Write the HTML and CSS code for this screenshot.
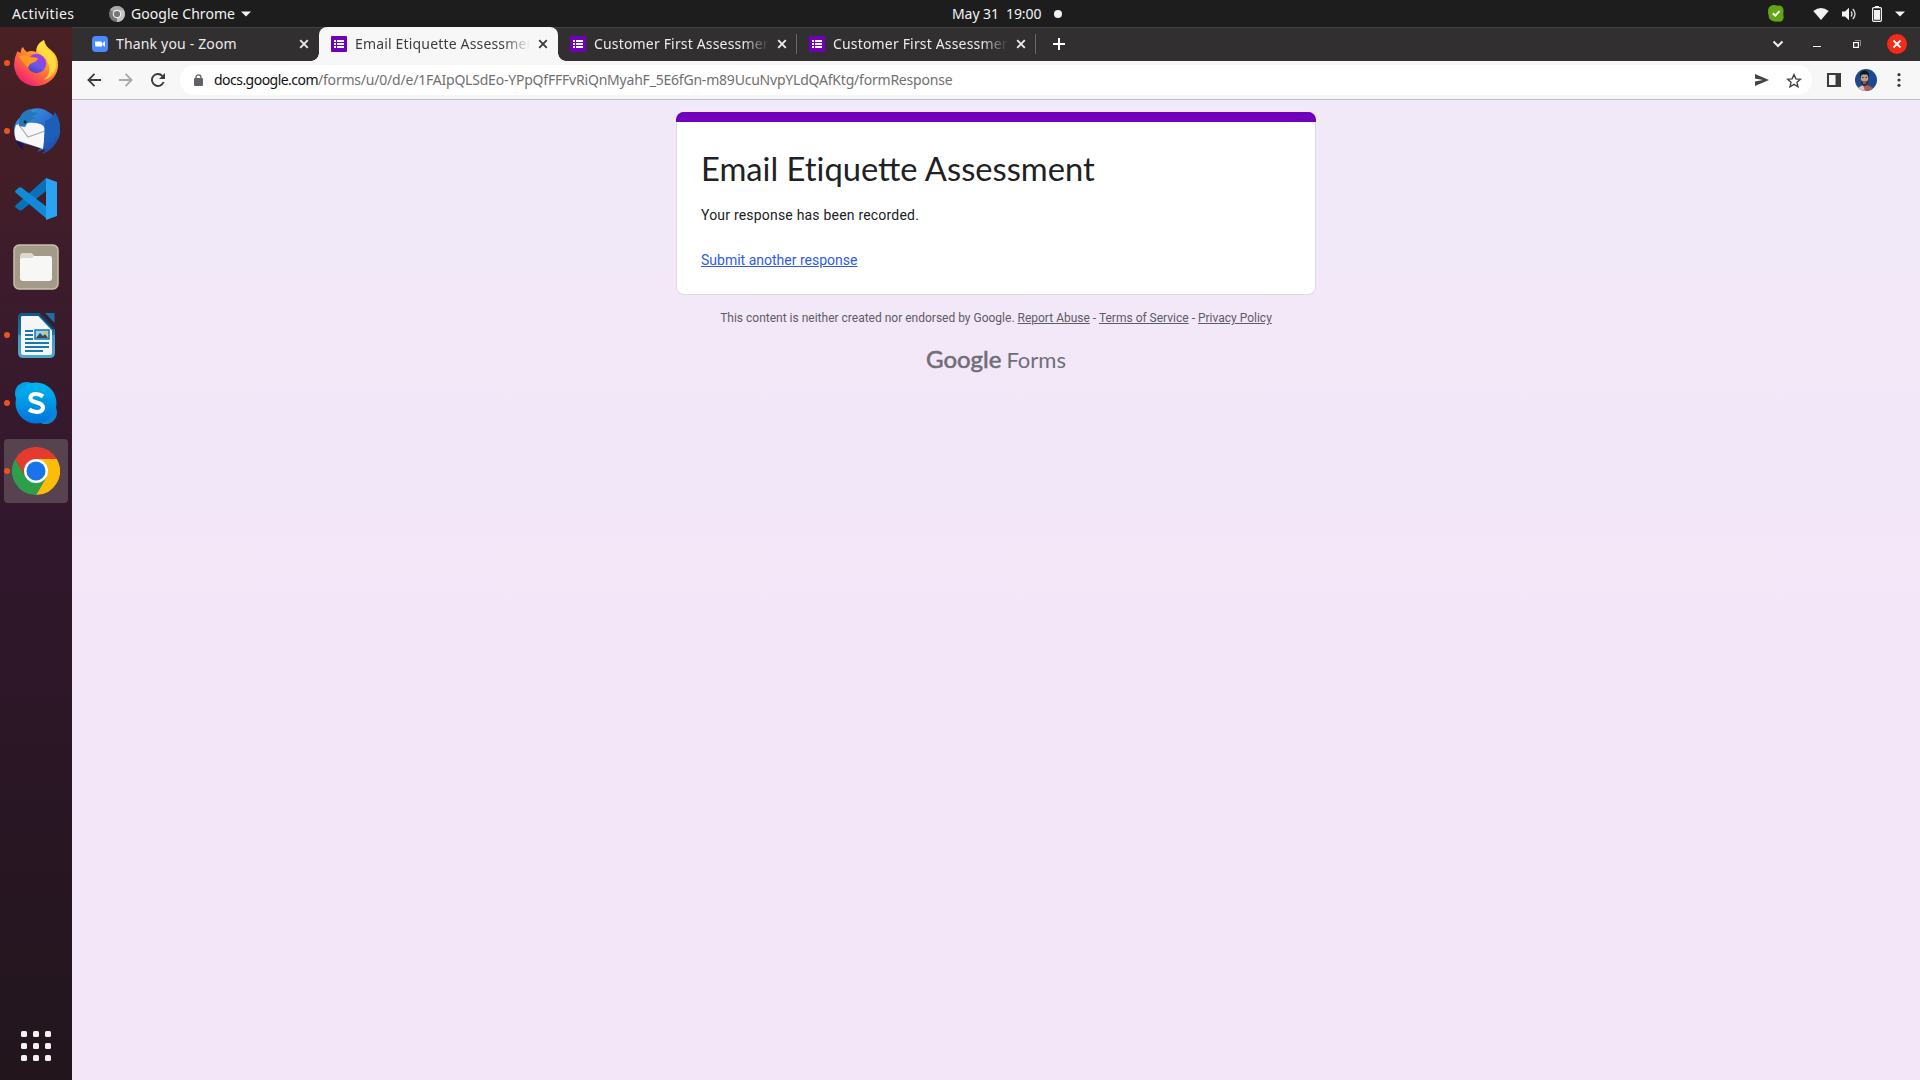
FILE: index.html
```html
<!DOCTYPE html>
<html lang="en">
<head>
<meta charset="utf-8">
<title>Email Etiquette Assessment</title>
<link rel="stylesheet" href="styles.css">
</head>
<body>
<svg width="0" height="0" class="defs" aria-hidden="true">
  <defs>
    <linearGradient id="fox" x1="1" y1="0" x2=".25" y2="1"><stop offset="0" stop-color="#fff44f"/><stop offset=".35" stop-color="#ffb52c"/><stop offset=".62" stop-color="#ff7139"/><stop offset="1" stop-color="#f01b74"/></linearGradient>
    <linearGradient id="globe" x1=".8" y1="0" x2=".3" y2="1"><stop offset="0" stop-color="#b833e1"/><stop offset=".6" stop-color="#6b57e8"/><stop offset="1" stop-color="#4b3fb5"/></linearGradient>
    <linearGradient id="bird" x1="0" y1="0" x2="1" y2="1"><stop offset="0" stop-color="#3fa5e8"/><stop offset=".5" stop-color="#2a6fd0"/><stop offset="1" stop-color="#1d3f9a"/></linearGradient>
    <linearGradient id="skype" x1="0" y1="0" x2="0" y2="1"><stop offset="0" stop-color="#00b7f0"/><stop offset="1" stop-color="#0074d9"/></linearGradient>
    <linearGradient id="writer" x1="0" y1="0" x2="0" y2="1"><stop offset="0" stop-color="#0e5c8d"/><stop offset=".5" stop-color="#1a78ad"/><stop offset=".5" stop-color="#3f97c6"/><stop offset="1" stop-color="#4ba6d2"/></linearGradient>
    <symbol id="forms" viewBox="0 0 16 16"><rect width="16" height="16" rx="1" fill="#7200ba"/><path d="M3 4h2v2H3zm3 0h7v2H6zM3 7h2v2H3zm3 0h7v2H6zm-3 3h2v2H3zm3 0h7v2H6z" fill="#fff"/></symbol>
    <symbol id="x" viewBox="0 0 10 10"><path d="M1.200 1.200l7.600 7.600M8.800 1.200L1.200 8.800" stroke="currentColor" stroke-width="1.900" fill="none"/></symbol>
  </defs>
</svg>

<header class="topbar">
  <span class="activities">Activities</span>
  <div class="appmenu">
    <svg width="16" height="16" viewBox="0 0 16 16"><circle cx="8" cy="8" r="8" fill="#777"/><path d="M8 8L1.100 4A8 8 0 0 1 14.900 4z" fill="#aaa"/><path d="M8 16a8 8 0 0 0 6.900-12H8z" fill="#c4c4c4"/><circle cx="8" cy="8" r="4.300" fill="#eee"/><circle cx="8" cy="8" r="3.100" fill="#777"/></svg>
    <span class="appname">Google Chrome</span>
    <svg width="10" height="6" viewBox="0 0 10 6"><path d="M0 .5h10L5 5.500z" fill="#f2f2f2"/></svg>
  </div>
  <div class="clock"><span class="date">May 31&nbsp; 19:00</span><i></i></div>
  <div class="tray">
    <svg width="16" height="17" viewBox="0 0 16 17"><path d="M6 0q4 1 6 .6Q16 2 15.500 7q-.5 2 .2 5-.5 4.500-4 4.700-2-.4-4 0Q.3 16 .5 10-.3 7 .3 4 1.500.3 6 0z" fill="#63a615"/><path d="M4.800 8.300l2.500 2.300 4.200-4.400" stroke="#fff" stroke-width="1.900" fill="none"/></svg>
    <svg class="wifi" width="16" height="12" viewBox="0 0 16 12"><path d="M.3 3Q8-3 15.700 3L8 12z" fill="#f2f2f2"/></svg>
    <svg class="vol" width="15" height="14" viewBox="0 0 15 14"><path d="M0 4.500h3L7 .8v12.400L3 9.500H0z" fill="#f2f2f2"/><path d="M9 4.500q2 2.500 0 5M10.800 2q4.500 5 0 10" stroke="#ddd" stroke-width="1.300" fill="none"/></svg>
    <svg class="bat" width="10" height="16" viewBox="0 0 10 16"><path d="M3 0h4v2H3z" fill="#f2f2f2"/><rect x=".6" y="1.700" width="8.800" height="13.600" rx="1" fill="none" stroke="#f2f2f2" stroke-width="1.200"/><path d="M2 4h6v9.800H2z" fill="#f2f2f2"/></svg>
    <svg class="caret" width="10" height="6" viewBox="0 0 10 6"><path d="M0 .5h10L5 5.500z" fill="#f2f2f2"/></svg>
  </div>
</header>

<div class="desktop">
  <nav class="dock">
    <div class="app running"><svg width="44" height="48" viewBox="0 0 44 48">
      <path d="M3.500 12Q0 19 0 26c1 13 10.500 21 22 21s22-9 22-21q0-9-6-14-7-5-8-11-8 5-8 12-5-2-9 0-3-2-4-5-2 1-2.500 6Q4 13 3.500 12z" fill="url(#fox)"/>
      <path d="M30 1q0 7 6 11 7 6 6 16-2 10-12 13 7-6 5-14-2-8-8-11-5-3-4-8 2-5 7-7z" fill="#ffe544" opacity=".8"/>
      <circle cx="22.500" cy="24.500" r="9.700" fill="url(#globe)"/><path d="M5 17q7-2 12 1l7 1q-1 4-6 5-3 1-4 5-5-5-9-12z" fill="#ff9a1f"/></svg></div>
    <div class="app running"><svg width="48" height="48" viewBox="0 0 48 48">
      <path d="M10 9Q18-1 31 2q15 6 17 22-2 17-18 23l4-5-9 3 4-5-16-3-9-4Q-2 17 10 9z" fill="url(#bird)"/><path d="M4 18q9-3 20-2 10 1 9 9l-2 17L4 33Q1 25 4 18z" fill="#f7f7f9"/><path d="M7 18l9 12 17-6" fill="none" stroke="#aaa" stroke-width="1.200"/><path d="M18 2Q6 5 7 19l6 1q3-7 12-9l-5-1 7-4-7-1z" fill="#2377bd"/><circle cx="13" cy="15" r="1.400" fill="#122"/><path d="M33 14q8-3 10-9 9 14 3 27l-3-5-2 9-4-3-3 5-2-5z" fill="#1d5fb8"/><path d="M4 34l8 3q-2 3 0 6-6-3-8-9z" fill="#20134f"/></svg></div>
    <div class="app"><svg width="42" height="42" viewBox="0 0 42 42"><path d="M0 29q0-1 1-2L31 0v13L7 32q-1.500 1-3 0z" fill="#0871b8"/><path d="M0 13l4-3.500q1.500-.8 3 .5L32 29v12L1 15q-1-1-1-2z" fill="#118bd8"/><path d="M31 0l11 4v34l-11 4z" fill="#29a3f2"/></svg></div>
    <div class="app"><svg width="46" height="46" viewBox="0 0 46 46"><rect x="1" y="1" width="44" height="44" rx="5" fill="#a39b88" stroke="#c6bfaf" stroke-width="1.500"/><path d="M7 12q0-3 3-3h8q2 0 3 3v8H7z" fill="#dcd8cf"/><path d="M7 16q0-2 2-2h10l2-2h16q2 0 2 2v20q0 3-3 3H10q-3 0-3-3z" fill="#f7f7f5"/></svg></div>
    <div class="app running"><svg width="37" height="45" viewBox="0 0 37 45"><path d="M4 1.500h17L35.500 17v22.500q0 4-4 4H5.500q-4 0-4-4V5q0-3.500 2.500-3.500z" fill="#f6f6f6" stroke="url(#writer)" stroke-width="3"/><path d="M27 0h9.500v10z" fill="#1870a6"/><path d="M22 1l14 15" stroke="#123d59" stroke-width="2"/><path d="M7 18h8M7 22h8M7 26h8M7 30h24M7 34h24M7 38h18" stroke="#1778ae" stroke-width="2"/><rect x="17" y="17" width="14" height="9" fill="#8ed4ef" stroke="#1778ae" stroke-width="1.500"/><path d="M18 25l4-5 3 3 2-2 3 4z" fill="#444"/><circle cx="28" cy="20" r="1.600" fill="#f5bb20"/></svg></div>
    <div class="app running"><svg width="42" height="42" viewBox="0 0 42 42"><circle cx="11.500" cy="11.500" r="11.500" fill="#079fe4"/><circle cx="30.500" cy="30.500" r="11.500" fill="#1381d6"/><circle cx="21" cy="21" r="20.500" fill="url(#skype)"/><path d="M28 14.500q-3.500-2.700-7.500-2.500-5 .3-5 4 0 3 5.500 4.300 7 1.700 7 5.200 0 4-6 4.500-4.500 0-8-2.500" fill="none" stroke="#fff" stroke-width="4.200"/></svg></div>
    <div class="app running active"><svg width="48" height="48" viewBox="0 0 48 48"><path d="M24 12h20.800A24 24 0 0 1 24 48l10.400-18z" fill="#fbbc0a"/><path d="M3.200 12L13.600 30 24 36l10.400-6L24 48A24 24 0 0 1 3.200 12z" fill="#2e9e4b"/><path d="M24 12h20.800A24 24 0 0 0 3.200 12l10.400 18z" fill="#e33b2e"/><circle cx="24" cy="24" r="12" fill="#fff"/><circle cx="24" cy="24" r="9.500" fill="#1a73e8"/></svg></div>
    <div class="grid"><i></i><i></i><i></i><i></i><i></i><i></i><i></i><i></i><i></i></div>
  </nav>

  <main class="window">
    <div class="tabs">
      <div class="tab first"><svg width="16" height="16" viewBox="0 0 16 16"><rect width="16" height="16" rx="4" fill="#4a8cff"/><path d="M3 5.500h5.500q1.500 0 1.500 1.500v3.500H4.500Q3 10.500 3 9zM10.500 7L13 5.300v5.400L10.500 9z" fill="#fff"/></svg><span class="label">Thank you - Zoom</span><svg class="close" width="10" height="10"><use href="#x"/></svg></div>
      <div class="tab current"><svg width="16" height="16"><use href="#forms"/></svg><span class="label fade">Email Etiquette Assessment</span><svg class="close" width="10" height="10"><use href="#x"/></svg></div>
      <div class="tab ruled"><svg width="16" height="16"><use href="#forms"/></svg><span class="label fade">Customer First Assessment</span><svg class="close" width="10" height="10"><use href="#x"/></svg></div>
      <div class="tab ruled"><svg width="16" height="16"><use href="#forms"/></svg><span class="label fade">Customer First Assessment</span><svg class="close" width="10" height="10"><use href="#x"/></svg></div>
      <svg class="plus" width="12" height="12" viewBox="0 0 12 12"><path d="M6 0v12M0 6h12" stroke="#fff" stroke-width="2"/></svg>
      <div class="controls">
        <svg width="12" height="8" viewBox="0 0 12 8"><path d="M1.500 1.500L6 6l4.500-4.500" fill="none" stroke="#eee" stroke-width="2"/></svg>
        <svg width="8" height="8" viewBox="0 0 8 8"><path d="M0 6.500h8" stroke="#fff"/></svg>
        <svg width="8" height="8" viewBox="0 0 8 8"><path d="M2 .5h5.500V6" fill="none" stroke="#8a8888"/><rect x=".6" y="2.600" width="4.800" height="4.800" fill="none" stroke="#fff" stroke-width="1.200"/></svg>
        <svg width="20" height="20" viewBox="0 0 20 20"><circle cx="10" cy="10" r="10" fill="#f52a17"/><path d="M6.500 6.500l7 7M13.500 6.500l-7 7" stroke="#fff" stroke-width="1.800"/></svg>
      </div>
    </div>
    <div class="toolbar">
      <div class="navs">
        <svg width="14" height="14" viewBox="0 0 14 14"><path d="M14 7H1.500M7.500 .8L1.400 7l6.100 6.200" fill="none" stroke="#3c3c3c" stroke-width="1.800"/></svg>
        <svg width="14" height="14" viewBox="0 0 14 14"><path d="M0 7h12.500M6.500 .8L12.600 7l-6.100 6.200" fill="none" stroke="#a9a9a9" stroke-width="1.800"/></svg>
        <svg width="14" height="14" viewBox="0 0 14 14"><path d="M12.600 9A6 6 0 1 1 11.300 2.800L13 4.500" fill="none" stroke="#3c3c3c" stroke-width="1.900"/><path d="M14 0v6H8z" fill="#3c3c3c"/></svg>
      </div>
      <div class="omnibox">
        <svg width="9" height="12" viewBox="0 0 9 12"><path d="M2 5V3.300a2.500 2.500 0 0 1 5 0V5" fill="none" stroke="#5f6368" stroke-width="1.300"/><rect y="4" width="9" height="8" rx="1" fill="#5f6368"/></svg>
        <span class="url"><b>docs.google.com</b>/forms/u/0/d/e/1FAIpQLSdEo-YPpQfFFFvRiQnMyahF_5E6fGn-m89UcuNvpYLdQAfKtg/formResponse</span>
        <svg class="send" width="14" height="12" viewBox="0 0 14 12"><path d="M0 0l14 6L0 12V7.500L8 6 0 4.500z" fill="#444"/></svg>
        <svg class="star" width="16" height="15" viewBox="0 0 16 15"><path d="M8 1.600l1.900 4.300 4.500.4-3.400 3 1 4.500L8 11.400l-4 2.400 1-4.500-3.400-3 4.500-.4z" fill="none" stroke="#444" stroke-width="1.400"/></svg>
      </div>
      <svg class="panel" width="14" height="14" viewBox="0 0 14 14"><path d="M0 0h14v14H0zM2 2v10h6.500V2z" fill="#3c3c3c" fill-rule="evenodd"/></svg>
      <svg class="avatar" width="22" height="22" viewBox="0 0 22 22"><clipPath id="round"><circle cx="11" cy="11" r="11"/></clipPath><g clip-path="url(#round)"><path d="M0 0h22v22H0z" fill="#1d4a8c"/><path d="M1 22q1-4 7-6h4q7 2 7 6z" fill="#a9605c"/><path d="M3 19l5-3 2 6H4z" fill="#d9c5c5"/><ellipse cx="9.500" cy="9.500" rx="3.700" ry="5.500" fill="#c49a8a"/><path d="M5.300 9Q4 1.500 9.500 1.500T13.700 9L12.500 5.500h-6z" fill="#14161f"/><path d="M5.800 11l1.700 1.600h4L13.200 11q0 6-3.700 6t-3.700-6z" fill="#332a2e"/><path d="M8 14h3" stroke="#c99" stroke-width="1"/><path d="M7 8.500h1.500M10.500 8.500H12" stroke="#322" stroke-width=".9"/></g></svg>
      <svg class="dots" width="4" height="14" viewBox="0 0 4 14"><g fill="#3c3c3c"><circle cx="2" cy="1.700" r="1.600"/><circle cx="2" cy="7" r="1.600"/><circle cx="2" cy="12.300" r="1.600"/></g></svg>
    </div>
    <section class="page">
      <article class="card">
        <h1>Email <span class="loose">Et</span>iquette Assessment</h1>
        <p>Your response has been recorded.</p>
        <a class="again">Submit another response</a>
      </article>
      <p class="legal">This content is neither created nor endorsed by Google. <u>Report Abuse</u> - <u>Terms of Service</u> - <u>Privacy Policy</u></p>
      <p class="brand"><span class="goog">Google</span><span class="frm">Forms</span></p>
    </section>
  </main>
</div>
</body>
</html>
```
FILE: styles.css
```css
* { box-sizing: border-box; }
body {
  margin: 0;
  width: 1920px;
  height: 1080px;
  overflow: hidden;
  display: flex;
  flex-direction: column;
  font-family: "Noto Sans", sans-serif;
  font-size: 14px;
}
svg { display: block; flex: none; }
b { font-weight: 400; }
.defs { position: absolute; }

.topbar {
  height: 27px;
  flex: none;
  display: grid;
  grid-template-columns: 109px 843px 1fr auto;
  align-items: center;
  background: #1d1d1d;
  color: #f2f2f2;
  white-space: nowrap;
}
.activities { padding-left: 12px; letter-spacing: .4px; }
.appmenu, .clock, .tray { display: flex; align-items: center; }
.appname { margin: 0 6px; letter-spacing: .05px; }
.date { letter-spacing: -.08px; padding-bottom: 1px; }
.clock i { width: 8px; height: 8px; border-radius: 50%; background: #f2f2f2; margin-left: 13px; }
.tray { padding-right: 15px; }
.wifi { margin-left: 29px; }
.vol { margin-left: 13px; }
.bat { margin-left: 15px; }
.caret { margin-left: 13px; }

.desktop { flex: 1; display: flex; min-height: 0; }
.dock {
  width: 72px;
  flex: none;
  display: flex;
  flex-direction: column;
  align-items: center;
  padding-top: 4px;
  gap: 4px;
  background: linear-gradient(#4a2023 0, #3a1b2c 28%, #32172d 45%, #24161f 92%, #22151c);
}
.app {
  width: 64px;
  height: 64px;
  flex: none;
  display: flex;
  align-items: center;
  justify-content: center;
  position: relative;
  border-radius: 4px;
}
.app.active { background: #57424f; }
.running::before {
  content: "";
  position: absolute;
  left: 0;
  top: 29px;
  width: 6px;
  height: 6px;
  border-radius: 50%;
  background: #e95420;
}
.grid {
  margin: auto 0 19px;
  display: grid;
  grid-template-columns: repeat(3, 6px);
  gap: 6px;
}
.grid i { height: 6px; border-radius: 1.5px; background: #f3f1ef; }

.window { flex: 1; display: flex; flex-direction: column; }
.tabs {
  height: 34px;
  flex: none;
  display: flex;
  align-items: stretch;
  background: #322f30;
  box-shadow: inset 0 1px #454344;
  color: #ebebeb;
}
.tab {
  width: 239px;
  display: flex;
  align-items: center;
  padding: 0 10px 0 12px;
  position: relative;
}
.tab.first { width: 247px; padding-left: 20px; padding-right: 10px; }
.label {
  flex: 1;
  margin: 0 6px 0 8px;
  padding-bottom: 1px;
  overflow: hidden;
  white-space: nowrap;
  letter-spacing: .17px;
}
.label.fade { -webkit-mask-image: linear-gradient(90deg, #000 84%, transparent 99%); mask-image: linear-gradient(90deg, #000 84%, transparent 99%); }
.tab.current {
  background: #f7f7f7;
  color: #3e3e3e;
  border-radius: 8px 8px 0 0;
}
.current::before, .current::after {
  content: "";
  position: absolute;
  bottom: 0;
  width: 8px;
  height: 8px;
}
.current::before { left: -8px; background: radial-gradient(circle at 0 0, transparent 7.5px, #f7f7f7 8px); }
.current::after { right: -8px; background: radial-gradient(circle at 100% 0, transparent 7.5px, #f7f7f7 8px); }
.ruled::after {
  content: "";
  position: absolute;
  right: 0;
  top: 7px;
  width: 1px;
  height: 20px;
  background: #6a6868;
}
.plus { margin: 11px 0 0 17px; }
.controls { margin-left: auto; display: flex; align-items: center; padding-right: 13px; }
.controls svg:nth-child(2) { margin-left: 29px; }
.controls svg:nth-child(3) { margin-left: 32px; }
.controls svg:nth-child(4) { margin-left: 26px; }

.toolbar {
  height: 39px;
  flex: none;
  display: flex;
  align-items: center;
  background: #f7f7f7;
  border-bottom: 1px solid #bfbfbf;
}
.navs { display: flex; gap: 18px; padding-left: 15px; width: 108px; }
.omnibox {
  width: 1632px;
  height: 30px;
  border-radius: 15px;
  background: #fff;
  display: flex;
  align-items: center;
  padding: 0 10px 0 14px;
}
.url { margin-left: 11px; padding-bottom: 1px; color: #70706f; white-space: nowrap; letter-spacing: -.21px; }
.url b { color: #111; letter-spacing: -.53px; }
.send { margin-left: auto; }
.star { margin-left: 17px; }
.panel { margin-left: 15px; }
.avatar { margin-left: 14px; }
.dots { margin-left: 20px; }

.page {
  flex: 1;
  display: flex;
  flex-direction: column;
  align-items: center;
  padding-top: 12px;
  background: linear-gradient(#f1e9f8, #f3e6f8 60%, #f3e6f8);
  font-family: Roboto, sans-serif;
}
.card {
  width: 640px;
  height: 183px;
  background: linear-gradient(#7200ba 10px, #fff 10px) border-box;
  border: solid #dadce0;
  border-width: 0 1px 1px;
  border-image: none;
  border-radius: 8px;
  padding: 37px 24px 0;
  color: #202124;
  position: relative;
}
.card::before {
  content: "";
  position: absolute;
  left: -1px;
  right: -1px;
  top: 0;
  height: 10px;
  border-radius: 8px 8px 0 0;
  background: #7200ba;
}
h1 { margin: 0; font: 400 32.7px/40px Lato, sans-serif; }
.loose { letter-spacing: .1px; }
.card p { margin: 16px 0 0; line-height: 20px; letter-spacing: .2px; }
.again { display: block; width: fit-content; margin-top: 25px; line-height: 20px; color: #2f5bea; text-decoration: underline; }
.legal { margin: 15px 0 0; font-size: 12px; line-height: 16px; color: #5f5b64; }
.brand {
  margin: 18px 0 0;
  display: flex;
  align-items: baseline;
  gap: 5px;
  font: 400 22px/30px Lato, sans-serif;
  color: #716d77;
}
.goog { font-size: 24px; -webkit-text-stroke: .6px #716d77; }
```
